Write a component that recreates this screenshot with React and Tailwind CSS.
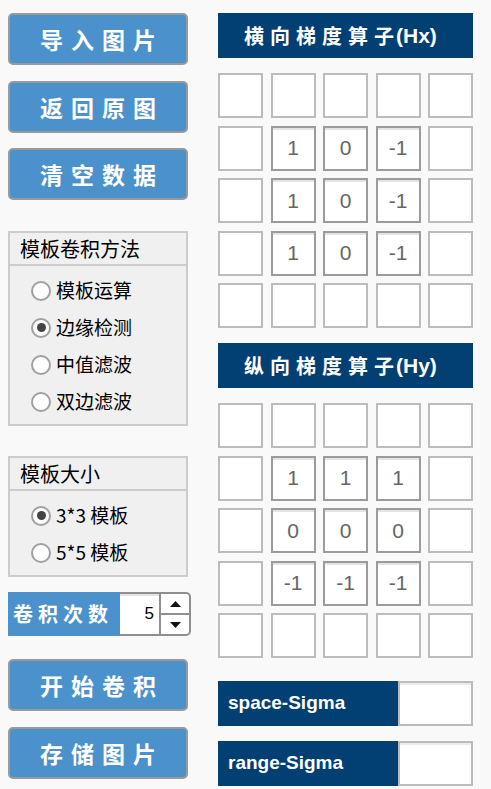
import React from "react";

const cjk = { fontFamily: '"Noto Sans CJK SC", "Liberation Sans", sans-serif' };
const arial = { fontFamily: '"Liberation Sans", Arial, sans-serif' };

const hx = [
  ["", "", "", "", ""],
  ["", "1", "0", "-1", ""],
  ["", "1", "0", "-1", ""],
  ["", "1", "0", "-1", ""],
  ["", "", "", "", ""],
];

const hy = [
  ["", "", "", "", ""],
  ["", "1", "1", "1", ""],
  ["", "0", "0", "0", ""],
  ["", "-1", "-1", "-1", ""],
  ["", "", "", "", ""],
];

const BlueButton = ({ label }) => (
  <button
    className="h-[52px] w-[180px] rounded-[5px] border-2 border-[#9a9a9a] bg-[#4b92cc] pl-[8px] text-[23px] font-bold tracking-[8px] text-white"
    style={cjk}
  >
    {label}
  </button>
);

const Radio = ({ label, checked }) => (
  <label className="flex h-[37px] items-center pl-[21px]">
    <span className="flex h-[20px] w-[20px] items-center justify-center rounded-full border-2 border-[#a0a0a0] bg-white">
      {checked && <span className="h-[9px] w-[9px] rounded-full bg-[#444]" />}
    </span>
    <span className="ml-[5px] text-[19px] text-black" style={cjk}>
      {label}
    </span>
  </label>
);

const GroupBox = ({ title, options, selected, className }) => (
  <div className={"w-[180px] border-2 border-[#cccccc] bg-[#f0f0f0] " + className}>
    <div className="flex h-[33px] items-center border-b-2 border-[#cccccc] pl-[10px] text-[20px] text-black" style={cjk}>
      {title}
    </div>
    <div className="pt-[6px]">
      {options.map((o, i) => (
        <Radio key={o} label={o} checked={i === selected} />
      ))}
    </div>
  </div>
);

const Header = ({ label, sub }) => (
  <div className="flex h-[45px] w-[255px] items-center bg-[#023f73] pl-[26px] font-bold text-white">
    <span className="text-[20px] tracking-[6px]" style={cjk}>
      {label.slice(0, -1)}
    </span>
    <span className="text-[20px]" style={cjk}>
      {label.slice(-1)}
    </span>
    <span className="ml-[2px] text-[21px]" style={arial}>
      {sub}
    </span>
  </div>
);

const Grid = ({ data }) => (
  <div className="grid w-[255px] grid-cols-5 gap-x-[7.5px] gap-y-[7.5px]">
    {data.flat().map((v, i) =>
      v ? (
        <div
          key={i}
          className="flex h-[45px] items-center justify-center border-2 border-[#9b9b9b] bg-white text-[21px] text-[#666] shadow-[inset_0_2px_0_#e4e4e4]"
          style={arial}
        >
          {v}
        </div>
      ) : (
        <div key={i} className="h-[45px] border-2 border-[#bcbcbc] bg-white" />
      )
    )}
  </div>
);

const SigmaRow = ({ label, className }) => (
  <div className={"flex h-[45px] w-[255px] " + className}>
    <div className="flex w-[180px] items-center bg-[#023f73] pl-[10px] text-[19px] font-bold text-white" style={arial}>
      {label}
    </div>
    <div className="flex-1 border-2 border-[#bcbcbc] bg-white shadow-[inset_0_2px_0_#ececec]" />
  </div>
);

export default function App() {
  return (
    <div className="flex h-[789px] w-[491px] bg-[#f9f9f9] pl-[8px] pt-[13px]">
      <div className="flex w-[180px] flex-col">
        <BlueButton label="导入图片" />
        <div className="mt-[16px]">
          <BlueButton label="返回原图" />
        </div>
        <div className="mt-[15px]">
          <BlueButton label="清空数据" />
        </div>
        <GroupBox
          className="mt-[31px] h-[195px]"
          title="模板卷积方法"
          options={["模板运算", "边缘检测", "中值滤波", "双边滤波"]}
          selected={1}
        />
        <GroupBox
          className="mt-[30px] h-[121px]"
          title="模板大小"
          options={["3*3 模板", "5*5 模板"]}
          selected={0}
        />
        <div className="mt-[15px] flex h-[44px] w-[183px]">
          <div
            className="flex w-[112px] items-center bg-[#4b92cc] pl-[5px] text-[20px] font-bold tracking-[5px] text-white"
            style={cjk}
          >
            卷积次数
          </div>
          <div className="flex flex-1 rounded-r-[5px] border-2 border-l-0 border-[#8f8f8f] bg-white">
            <div
              className="flex w-[39px] items-center justify-end pr-[5px] text-[17px] text-black shadow-[inset_0_2px_0_#e4e4e4]"
              style={arial}
            >
              5
            </div>
            <div className="flex flex-1 flex-col border-l-2 border-[#8f8f8f]">
              <div className="flex flex-1 items-center justify-center border-b-2 border-[#8f8f8f]">
                <svg width="11" height="6" viewBox="0 0 11 6">
                  <path d="M0 6 L5.5 0 L11 6 Z" fill="#111" />
                </svg>
              </div>
              <div className="flex flex-1 items-center justify-center">
                <svg width="11" height="6" viewBox="0 0 11 6">
                  <path d="M0 0 L5.5 6 L11 0 Z" fill="#111" />
                </svg>
              </div>
            </div>
          </div>
        </div>
        <div className="mt-[23px]">
          <BlueButton label="开始卷积" />
        </div>
        <div className="mt-[16px]">
          <BlueButton label="存储图片" />
        </div>
      </div>
      <div className="ml-[30px] flex flex-col">
        <Header label="横向梯度算子" sub="(Hx)" />
        <div className="mt-[15px]">
          <Grid data={hx} />
        </div>
        <div className="mt-[15px]">
          <Header label="纵向梯度算子" sub="(Hy)" />
        </div>
        <div className="mt-[15px]">
          <Grid data={hy} />
        </div>
        <SigmaRow className="mt-[23px]" label="space-Sigma" />
        <SigmaRow className="mt-[15px]" label="range-Sigma" />
      </div>
    </div>
  );
}
